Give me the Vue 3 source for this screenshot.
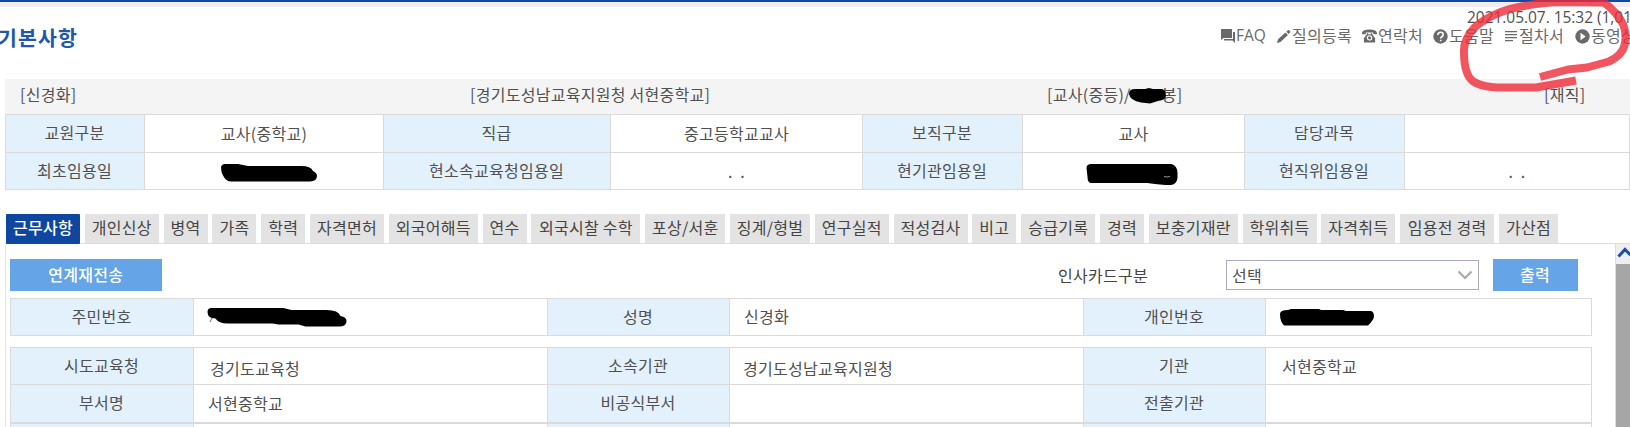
<script setup>
const tabs = [
  ['근무사항', 74], ['개인신상', 74], ['병역', 44], ['가족', 44], ['학력', 44], ['자격면허', 74],
  ['외국어해득', 89], ['연수', 44], ['외국시찰 수학', 109], ['포상/서훈', 80], ['징계/형벌', 80],
  ['연구실적', 74], ['적성검사', 74], ['비고', 44], ['승급기록', 74], ['경력', 44],
  ['보충기재란', 89], ['학위취득', 74], ['자격취득', 74], ['임용전 경력', 94], ['가산점', 59],
]
const summary = [
  ['교원구분', '교사(중학교)', '직급', '중고등학교교사', '보직구분', '교사', '담당과목', ''],
  ['최초임용일', '', '현소속교육청임용일', '.  .', '현기관임용일', '', '현직위임용일', '.  .'],
]
const identity = ['주민번호', '', '성명', '신경화', '개인번호', '']
const office = [
  ['시도교육청', '경기도교육청', '소속기관', '경기도성남교육지원청', '기관', '서현중학교'],
  ['부서명', '서현중학교', '비공식부서', '', '전출기관', ''],
  ['', '', '', '', '', ''],
]
</script>

<template>
  <div class="page">
    <div class="topbar"></div>
    <header class="head">
      <h1>기본사항</h1>
      <div class="tools">
        <div class="date">2021.05.07. 15:32 (1,01</div>
        <nav class="links">
          <a class="l1"><svg width="14" height="14" viewBox="0 0 14 14"><path d="M0 0h11v9H2.500L0 11zM12 3h2v11l-2.500-2.500H3V10h9z" /></svg><span>FAQ</span></a>
          <a class="l2"><svg width="14" height="14" viewBox="0 0 14 14"><path d="M0 14l1-3.800L8.500 3.500l2.500 2.400L3.500 13zM9.300 2.700l1.600-1.400q.6-.5 1.200 0l1 1q.6.600 0 1.200L11.700 5z" /></svg><span>질의등록</span></a>
          <a class="l3"><svg width="15" height="14" viewBox="0 0 16 14"><path d="M0 5V3.500Q1 0 8 0t8 3.500V5h-4V3.300H4V5zM5 4h1.500v1h3V4H11v1.500l3 4V14H2V9.500l3-4z" /><circle cx="8" cy="9" r="2.300" fill="none" stroke="#fff" stroke-width="1.200" /></svg><span>연락처</span></a>
          <a class="l4"><svg width="15" height="15" viewBox="0 0 15 15"><circle cx="7.500" cy="7.500" r="7.200" /><path d="M4.900 6q0-2.700 2.700-2.700T10.200 5.700Q10.200 7 8.500 8q-.8.500-.8 1.500M7.700 10.700v1.600" fill="none" stroke="#fff" stroke-width="1.600" /></svg><span>도움말</span></a>
          <a class="l5"><svg width="12" height="12" viewBox="0 0 12 12"><path d="M0 1h12v1.300H0zM0 4h12v1.300H0zM0 7h12v1.300H0zM0 10h8v1.300H0z" /></svg><span>절차서</span></a>
          <a class="l6"><svg width="15" height="15" viewBox="0 0 15 15"><circle cx="7.500" cy="7.500" r="7.200" /><path d="M5.500 3.800v7.400l5.200-3.700z" fill="#fff" /></svg><span>동영상</span></a>
        </nav>
      </div>
    </header>

    <section class="strip">
      <span class="s1">[신경화]</span>
      <span class="s2">[경기도성남교육지원청 서현중학교]</span>
      <span class="s3">[교사(중등)/<i class="gap"></i>봉]</span>
      <span class="s4">[재직]</span>
    </section>
    <section class="summary">
      <template v-for="(row, r) in summary" :key="r">
        <div v-for="(c, i) in row" :key="i" :class="['cell', i % 2 ? 'val' : 'key']">{{ c }}</div>
      </template>
    </section>

    <nav class="tabs">
      <div v-for="([name, w], i) in tabs" :key="name" class="tab" :class="{ active: i === 0 }" :style="{ width: w + 'px' }">{{ name }}</div>
    </nav>

    <main class="body">
      <div class="content">
        <div class="actions">
          <button class="btn resend">연계재전송</button>
          <label>인사카드구분</label>
          <div class="select">
            <span>선택</span>
            <svg width="16" height="10" viewBox="0 0 16 10"><path d="M1.500 1.500L8 8l6.500-6.500" fill="none" stroke="#aaa" stroke-width="2.200" /></svg>
          </div>
          <button class="btn print">출력</button>
        </div>
        <section class="detail">
          <div v-for="(c, i) in identity" :key="i" :class="['cell', i % 2 ? 'val' : 'key']">{{ c }}</div>
        </section>
        <section class="detail office">
          <template v-for="(row, r) in office" :key="r">
            <div v-for="(c, i) in row" :key="i" :class="['cell', i % 2 ? 'val' : 'key', 'r' + r, 'c' + i]">{{ c }}</div>
          </template>
        </section>
      </div>
      <aside class="scroll">
        <div class="up"><svg width="14" height="20" viewBox="0 0 14 20"><path d="M2.500 12.500L9 5.500l7 7" fill="none" stroke="#1a4fa5" stroke-width="3" /></svg></div>
        <div class="thumb"></div>
      </aside>
    </main>

    <svg class="marks" width="1630" height="427" viewBox="0 0 1630 427">
      <path d="M221 167q1-3 4-3h13l10 2h53q10 0 12 5 4 2 4 5 0 5-7 5.500H231q-5 0-8-6-2-3-2-8.500z" />
      <path d="M1129 94q0-5 6-5h10l4-1 4 1h9q4 1 4 7 0 4-8 5l-8 2.500-9-1q-11-2-12-8.500z" />
      <path d="M1086.500 168q0-4 5-4h80q6 2 6 9v5q-1 7-7 7h-5q-12-1-18-2h-56q-4 0-4-6z" />
      <path d="M1164 176.500q3 1 6 0" fill="none" stroke="#bbb" stroke-width=".8" />
      <path d="M207.500 312q0-4 4-4h72l8 2h35q12 0 14 6 6 1 6 5 0 5-6 5.500h-35l-7-2h-20l-6-1h-45q-9 0-12-5-8 0-8-6.500z" />
      <path d="M210 322l2-4" fill="none" stroke="#666" />
      <path d="M1280 314q0-4 8-4l3-1h28l2 1h22l3 1h25q3 1 3 5 0 4-6 9.500h-84q-4-4-4-11.500z" />
      <path class="ring" d="M1540 77l28-7.500 19-2 22-6q13-6 15.500-16t-1-20.500Q1617 12 1604 2.500L1560 2q-21 1-36 4-30 5-49 21-12 13-11 25 0 26 12 31 9 4 21 4.500h39l40-7" />
    </svg>
  </div>
</template>

<style>
body { margin: 0; background: #fff; }
</style>

<style scoped>
.page {
  position: relative; width: 1630px; height: 427px; overflow: hidden;
  display: flex; flex-direction: column; box-sizing: border-box; background: #fff;
  font: 16px/20px "Noto Sans CJK KR", sans-serif; letter-spacing: .28px; color: #505050;
  white-space: pre;
}
.topbar { height: 5px; flex: none; border-top: 2px solid #1149a2; background: #eee; }
.head { height: 72px; flex: none; display: flex; justify-content: space-between; }
h1 { margin: 15px 0 0 -2px; font-size: 20.500px; line-height: 30px; letter-spacing: 1.100px; font-weight: 600; color: #2057aa; }
.tools { width: 410px; flex: none; }
.date { font-family: "Open Sans", sans-serif; font-size: 15.500px; letter-spacing: -.04px; padding-top: 1px; margin: -1px 0 0 247px; height: 19px; color: #505050; }
.links { display: flex; height: 20px; align-items: center; color: #6a6a6a; }
.links a { display: flex; align-items: center; flex: none; }
.links svg { fill: #6a6a6a; flex: none; margin-right: 1px; }
.links span { position: relative; top: -1px; }
.l1 { width: 56px; font-family: "Open Sans", sans-serif; font-size: 15.500px; letter-spacing: 0; margin-left: 1px; }
.l2 { width: 85px; }
.l3 { width: 71px; }
.l4 { width: 72px; }
.l5 { width: 70px; }
.l6 { width: 70px; }
.links .l5 svg { margin-right: 2px; }
.strip { height: 35px; flex: none; margin: 0 0 0 5px; background: #f4f4f4; display: grid; grid-template-columns: 465px 577px 497px 1fr; line-height: 30px; }
.s1 { padding-left: 15px; }
.gap { display: inline-block; width: 31px; }
.cell { box-sizing: border-box; border-left: 1px solid #dadada; border-top: 1px solid #dadada; text-align: center; line-height: 35px; overflow: hidden; }
.key { background: #e3f1fd; padding-right: 1px; }
.summary { flex: none; height: 76px; margin-left: 5px; display: grid; grid-template-columns: 139px 239px 227px 252px 160px 222px 160px 225px; grid-template-rows: 38px 37px; border-bottom: 1px solid #dadada; width: 1625px; border-right: 1px solid #dadada; box-sizing: border-box; }
.summary .val { padding-top: 1px; }
.tabs { display: flex; flex: none; gap: 4.800px; height: 29px; margin: 24px 0 0 5px; padding-left: 1px; border-bottom: 1px solid #ddd; }
.tab { flex: none; box-sizing: border-box; background: #e3e3e3; text-align: center; line-height: 27px; color: #444; }
.active { background: #0f47a0; color: #fff; font-weight: 500; height: 30px; border-radius: 1px; }
.body { display: flex; flex: 1; min-height: 0; margin-left: 5px; }
.content { flex: 1; border-left: 1px solid #e2e2e2; padding: 15px 0 0 4px; overflow: hidden; min-width: 0; }
.actions { display: flex; align-items: center; height: 32px; margin-bottom: 7px; }
.btn { border: 0; padding: 0 0 2px; height: 32px; background: #64a4e7; color: #fff; font: 500 16px/30px "Noto Sans CJK KR", sans-serif; letter-spacing: .28px; }
.resend { width: 151.500px; }
label { margin-left: 896.500px; width: 168px; color: #444; }
.select { box-sizing: border-box; width: 253px; height: 30px; border: 1px solid #a8acbc; display: flex; align-items: center; justify-content: space-between; padding: 0 5px; }
.print { width: 85px; margin-left: 13.500px; }
.detail { box-sizing: border-box; width: 1582px; display: grid; grid-template-columns: 183px 354px 182px 354px 182px 326px; grid-template-rows: 37px; border-right: 1px solid #dadada; border-bottom: 1px solid #dadada; margin-bottom: 11px; }
.detail .cell { line-height: 34px; }
.detail .val { text-align: left; padding-left: 14px; }
.office { grid-template-rows: 37px 38px 37px; }
.office .c1.r0 { padding: 3px 0 0 16px; }
.office .c3.r0 { padding: 3px 0 0 13px; }
.office .c5.r0 { padding: 1px 0 0 16px; }
.office .c1.r1 { padding-top: 1px; }
.office .r2 { border-top-width: 2px; }
.scroll { width: 14px; flex: none; border-left: 1px solid #ddd; background: #eee; display: flex; flex-direction: column; }
.up { height: 20px; overflow: hidden; }
.thumb { flex: 1; background: #a6a6a6; }
.marks { position: absolute; left: 0; top: 0; }
.ring { fill: none; stroke: #ee2b37; stroke-width: 8; stroke-linejoin: round; opacity: .8; }
</style>
